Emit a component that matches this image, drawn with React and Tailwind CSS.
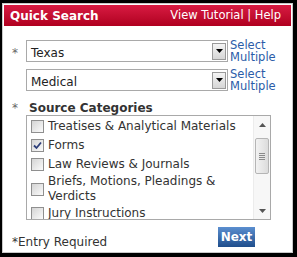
import React from 'react';

const font = { fontFamily: '"DejaVu Sans", Verdana, sans-serif' };

const Arrow = ({ up }) => (
  <svg width="7" height="4" viewBox="0 0 7 4">
    <path d={up ? 'M0 4 L3.5 0 L7 4 Z' : 'M0 0 L7 0 L3.5 4 Z'} fill="currentColor" />
  </svg>
);

const DropSelect = ({ value }) => (
  <div className="w-[202px] h-[22px] border border-[#a9a9a9] bg-white flex items-center justify-between pl-[4px] pr-[1px]">
    <span className="text-[12px] leading-[14px] text-[#222] mt-[4px]">{value}</span>
    <div className="w-[14px] h-[17px] border border-[#9a9a9a] bg-gradient-to-b from-[#f4f4f4] to-[#d6d6d6] flex items-center justify-center text-black">
      <Arrow />
    </div>
  </div>
);

const SelectMultiple = () => (
  <a className="ml-[2px] -mt-[1px] text-[11.5px] leading-[12px] text-[#2b5ca8] cursor-pointer">
    <span className="block">Select</span>
    <span className="block">Multiple</span>
  </a>
);

const Checkbox = ({ checked }) => (
  <div className="w-[13px] h-[13px] shrink-0 border border-[#8f8f8f] bg-gradient-to-br from-[#d4d4d4] to-[#fbfbfb] flex items-center justify-center">
    {checked && (
      <svg width="9" height="9" viewBox="0 0 9 9">
        <path d="M1 4.5 L3.5 7 L8 1.5" stroke="#2e3f7a" strokeWidth="1.8" fill="none" />
      </svg>
    )}
  </div>
);

const categories = [
  { label: 'Treatises & Analytical Materials', checked: false },
  { label: 'Forms', checked: true },
  { label: 'Law Reviews & Journals', checked: false },
  { label: 'Briefs, Motions, Pleadings & Verdicts', checked: false },
  { label: 'Jury Instructions', checked: false },
];

export default function App() {
  return (
    <div style={font} className="w-[297px] h-[257px] bg-black pl-[2px] pt-[3px] pr-[4px] pb-[4px]">
      <div className="h-full bg-white border border-[#c9c9c9] p-[1px] flex flex-col">
        <div className="h-[21px] shrink-0 bg-gradient-to-b from-[#d81a42] to-[#b0001f] flex items-center justify-between pl-[6px] pr-[10px] text-white">
          <span className="text-[12px] font-bold">Quick Search</span>
          <span className="text-[11.5px]">View Tutorial | Help</span>
        </div>

        <div className="flex items-start mt-[14px]">
          <span className="w-[22px] text-center text-[12px] leading-[22px] text-[#666] pt-[2px]">*</span>
          <DropSelect value="Texas" />
          <SelectMultiple />
        </div>
        <div className="flex items-start mt-[5px]">
          <span className="w-[22px]" />
          <DropSelect value="Medical" />
          <SelectMultiple />
        </div>

        <div className="flex items-center mt-[8px] h-[15px]">
          <span className="w-[22px] text-center text-[12px] text-[#666]">*</span>
          <span className="ml-[3px] text-[12px] font-bold text-[#333]">Source Categories</span>
        </div>

        <div className="ml-[22px] w-[245px] h-[108px] border border-[#a9a9a9] flex overflow-hidden">
          <div className="flex-1 pt-[1px] pl-[4px] pr-[16px]">
            {categories.map((c) => (
              <div key={c.label} className="flex items-center gap-[4px] min-h-[19px]">
                <Checkbox checked={c.checked} />
                <span className="text-[12px] leading-[15px] text-[#333]">{c.label}</span>
              </div>
            ))}
          </div>
          <div className="w-[17px] shrink-0 bg-[#f7f7f7] border-l border-[#ececec] flex flex-col items-center text-[#555]">
            <div className="h-[17px] flex items-center justify-center">
              <Arrow up />
            </div>
            <div className="mt-[5px] w-[14px] h-[36px] rounded-[2px] border border-[#b5b5b5] bg-gradient-to-r from-[#f2f2f2] to-[#dcdcdc] flex flex-col items-center justify-center gap-[1px]">
              <div className="w-[6px] h-px bg-[#8a8a8a]" />
              <div className="w-[6px] h-px bg-[#8a8a8a]" />
              <div className="w-[6px] h-px bg-[#8a8a8a]" />
              <div className="w-[6px] h-px bg-[#8a8a8a]" />
            </div>
            <div className="flex-1" />
            <div className="h-[17px] flex items-center justify-center">
              <Arrow />
            </div>
          </div>
        </div>

        <div className="flex items-start justify-between mt-[7px] pl-[8px] pr-[36px]">
          <span className="mt-[6px] text-[12px] text-[#333]">*Entry Required</span>
          <button className="w-[37px] h-[20px] bg-gradient-to-b from-[#5b8fd0] to-[#1f4e8c] text-white text-[12px] font-bold">
            Next
          </button>
        </div>
      </div>
    </div>
  );
}
